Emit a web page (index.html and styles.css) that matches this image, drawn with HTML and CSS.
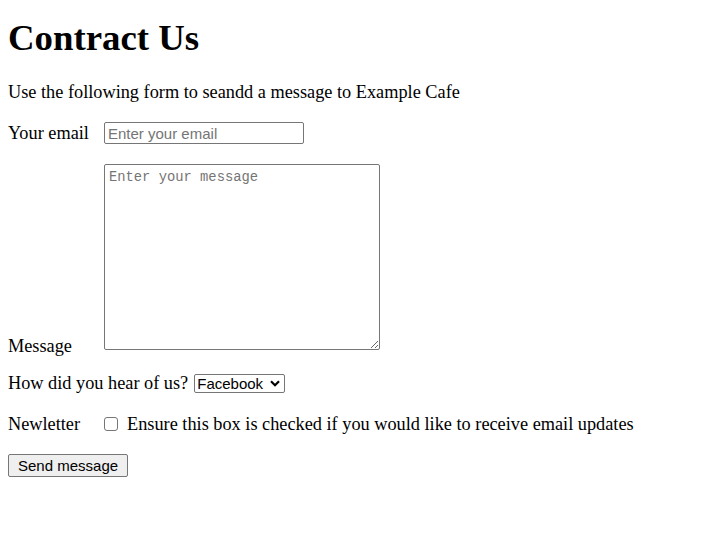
FILE: index.html
```html
<!DOCTYPE html>
<html lang="en">
<head>
<meta charset="utf-8">
<title>Contract Us</title>
<link rel="stylesheet" href="styles.css">
</head>
<body>
<h1 class="title">Contract Us</h1>
<p class="intro">Use the following form to seandd a message to Example Cafe</p>
<form class="contact">
  <div class="row">
    <label class="label" for="email">Your email</label>
    <input class="field field-email" id="email" type="email" placeholder="Enter your email">
  </div>
  <div class="row row-message">
    <label class="label label-message" for="msg">Message</label>
    <textarea class="field field-message" id="msg" placeholder="Enter your message"></textarea>
  </div>
  <div class="row row-select">
    <label for="src">How did you hear of us?</label>
    <span class="select-wrap">
      <select class="select" id="src"><option>Facebook</option><option>Instagram</option><option>Friend</option></select>
      <svg class="chevron" width="10" height="7" viewBox="0 0 10 7" aria-hidden="true"><path d="M1 1.2 L5 5.2 L9 1.2" fill="none" stroke="#000" stroke-width="2.2"/></svg>
    </span>
  </div>
  <div class="row">
    <span class="label">Newletter</span>
    <input class="check" type="checkbox" id="news">
    <label for="news">Ensure this box is checked if you would like to receive email updates</label>
  </div>
  <div class="row">
    <button class="send" type="button">Send message</button>
  </div>
</form>
</body>
</html>
```
FILE: styles.css
```css
html, body {
  background: #ffffff;
}
body {
  margin: 0;
  padding: 0 8px;
  font-family: "Liberation Serif", "Times New Roman", serif;
  font-size: 18.3px;
  color: #000000;
}
.title {
  font-size: 36.8px;
  line-height: 40px;
  font-weight: bold;
  margin: 18px 0 24px;
}
.intro {
  margin: 0 0 19px;
  line-height: 21px;
}
.contact {
  display: flex;
  flex-direction: column;
  gap: 20px;
}
.row {
  display: flex;
  align-items: baseline;
  line-height: 21px;
}
.label {
  width: 96px;
  flex: none;
}
.field {
  font-family: "Liberation Sans", Arial, sans-serif;
  font-size: 15px;
  color: #000000;
  border: 1px solid #767676;
  border-radius: 2px;
  box-sizing: border-box;
  margin: 0;
  background: #ffffff;
  outline: none;
}
.field::placeholder {
  color: #757575;
  opacity: 1;
}
.field-email {
  width: 200px;
  height: 22px;
  padding: 1px 3px;
  line-height: normal;
}
.row-message {
  align-items: flex-end;
  margin-bottom: 3px;
}
.label-message {
  margin-bottom: -7px;
}
.field-message {
  width: 276px;
  height: 186px;
  padding: 5px 4px 3px;
  font-family: "Liberation Mono", "DejaVu Sans Mono", monospace;
  font-size: 13.8px;
  line-height: 16px;
  resize: both;
}
.row-select {
  gap: 6px;
}
.select-wrap {
  display: flex;
  position: relative;
}
.select {
  appearance: none;
  -webkit-appearance: none;
  width: 91px;
  height: 19px;
  box-sizing: border-box;
  margin: 0;
  padding: 0 18px 0 2px;
  border: 1px solid #767676;
  border-radius: 2px;
  background: #ffffff;
  color: #000000;
  font-family: "Liberation Sans", Arial, sans-serif;
  font-size: 15px;
  line-height: 17px;
}
.chevron {
  position: absolute;
  right: 5px;
  top: 6px;
  pointer-events: none;
}
.check {
  appearance: none;
  -webkit-appearance: none;
  align-self: flex-start;
  width: 14px;
  height: 14px;
  margin: 3px 9px 0 0;
  border: 1px solid #767676;
  border-radius: 3px;
  background: #ffffff;
  box-sizing: border-box;
  flex: none;
}
.send {
  font-family: "Liberation Sans", Arial, sans-serif;
  font-size: 15px;
  color: #000000;
  height: 23px;
  padding: 1px 9px;
  margin: -1px 0 0;
  border: 1px solid #767676;
  border-radius: 2px;
  background: #efefef;
  line-height: 17px;
}
```
